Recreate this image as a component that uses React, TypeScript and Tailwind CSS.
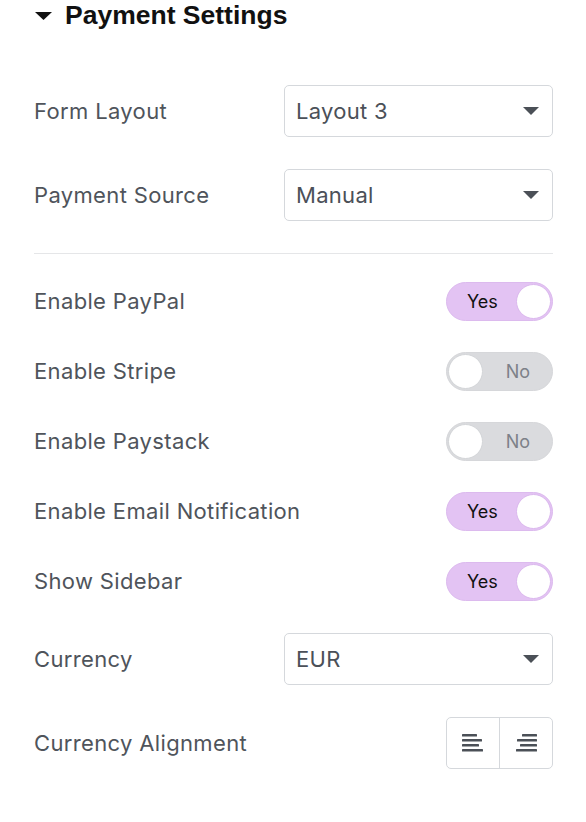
import React from 'react'

function Caret() {
  return (
    <svg width="16" height="8" viewBox="0 0 16 8" className="shrink-0">
      <path d="M0 0 H16 L8 8 Z" fill="#4b5057" />
    </svg>
  )
}

function Select({ value }: { value: string }) {
  return (
    <div className="w-[269px] h-[52px] flex items-center justify-between pl-[11px] pr-[13px] border border-[#d5d8dc] rounded-[5px] bg-white">
      <span className="text-[22px] tracking-[0.3px] text-[#4b5058]">{value}</span>
      <Caret />
    </div>
  )
}

function Toggle({ on }: { on: boolean }) {
  if (on) {
    return (
      <div className="w-[107px] h-[39px] rounded-full bg-[#e3c3f3] border border-[#dcbaee] flex items-center justify-between pl-[20px] pr-[1px]">
        <span className="text-[18px] text-[#111]">Yes</span>
        <div className="w-[35px] h-[35px] rounded-full bg-white border-[1.5px] border-[#dbb8ee]" />
      </div>
    )
  }
  return (
    <div className="w-[107px] h-[39px] rounded-full bg-[#dadbde] border border-[#d6d7da] flex items-center justify-between pl-[1px] pr-[22px]">
      <div className="w-[35px] h-[35px] rounded-full bg-white border-[1.5px] border-[#d3d5d8]" />
      <span className="text-[18px] text-[#7d8188]">No</span>
    </div>
  )
}

function AlignIcon({ right }: { right?: boolean }) {
  const widths = [15, 20, 17, 21]
  return (
    <svg width="22" height="18" viewBox="0 0 22 18">
      {widths.map((w, i) => (
        <rect key={i} x={right ? 22 - w : 0} y={i * 5} width={w} height="2.5" rx="0.6" fill="#4b5057" />
      ))}
    </svg>
  )
}

function Row({ label, children, h }: { label: string; children: React.ReactNode; h: string }) {
  return (
    <div className={`flex items-center justify-between ${h}`}>
      <span className="text-[22px] tracking-[0.35px] text-[#4f545b]">{label}</span>
      {children}
    </div>
  )
}

export default function App() {
  return (
    <div className="w-[586px] h-[822px] bg-white px-[34px] pr-[33px] font-['Inter',sans-serif]">
      {/* Heading */}
      <div className="h-[32px] flex items-center gap-[13px]">
        <svg width="17" height="8" viewBox="0 0 17 8" className="ml-[1px]">
          <path d="M0 0 H17 L8.5 8 Z" fill="#111" />
        </svg>
        <h2 className="text-[26.5px] font-bold text-[#111] font-['Liberation_Sans',Arial,sans-serif]">
          Payment Settings
        </h2>
      </div>

      <div className="mt-[53px] flex flex-col gap-[32px]">
        <Row label="Form Layout" h="h-[52px]">
          <Select value="Layout 3" />
        </Row>
        <Row label="Payment Source" h="h-[52px]">
          <Select value="Manual" />
        </Row>
      </div>

      <div className="mt-[32px] border-t border-[#e5e6e8]" />

      <div className="mt-[28px] flex flex-col gap-[31px]">
        <Row label="Enable PayPal" h="h-[39px]">
          <Toggle on />
        </Row>
        <Row label="Enable Stripe" h="h-[39px]">
          <Toggle on={false} />
        </Row>
        <Row label="Enable Paystack" h="h-[39px]">
          <Toggle on={false} />
        </Row>
        <Row label="Enable Email Notification" h="h-[39px]">
          <Toggle on />
        </Row>
        <Row label="Show Sidebar" h="h-[39px]">
          <Toggle on />
        </Row>
      </div>

      <div className="mt-[32px] flex flex-col gap-[32px]">
        <Row label="Currency" h="h-[52px]">
          <Select value="EUR" />
        </Row>
        <Row label="Currency Alignment" h="h-[52px]">
          <div className="w-[107px] h-[52px] flex border border-[#d5d8dc] rounded-[5px] bg-white">
            <div className="flex-1 flex items-center justify-center border-r border-[#d5d8dc]">
              <AlignIcon />
            </div>
            <div className="flex-1 flex items-center justify-center">
              <AlignIcon right />
            </div>
          </div>
        </Row>
      </div>
    </div>
  )
}
